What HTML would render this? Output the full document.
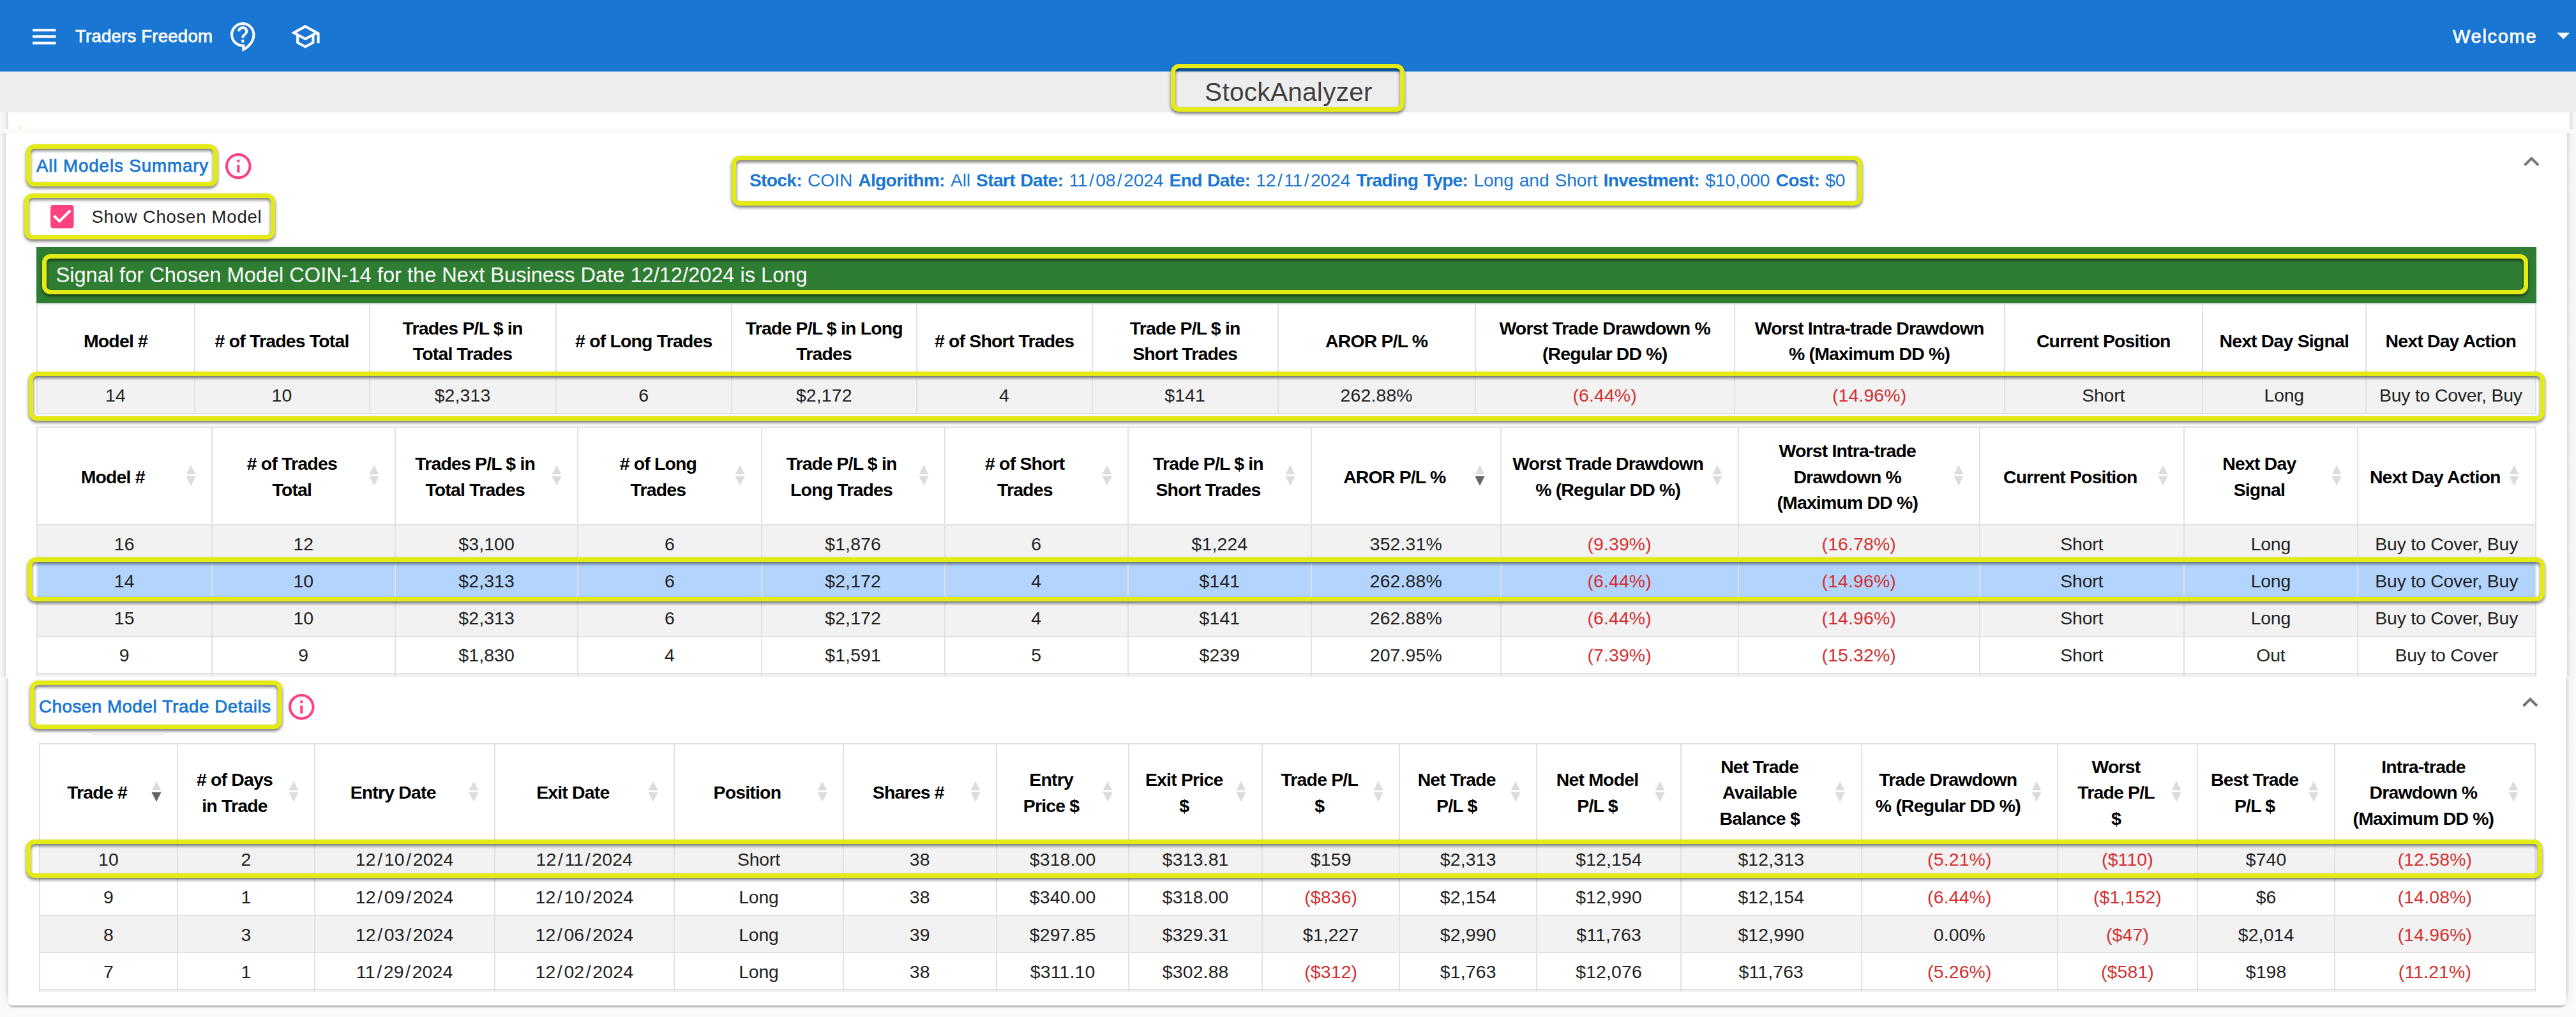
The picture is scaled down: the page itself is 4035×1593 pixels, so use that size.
<!DOCTYPE html>
<html><head><meta charset="utf-8"><style>
html,body{margin:0;padding:0;}
body{width:4035px;height:1593px;overflow:hidden;position:relative;background:#FAFAFA;font-family:"Liberation Sans", sans-serif;}
div{box-sizing:border-box;}
.a{position:absolute;}
.yb{position:absolute;border-style:solid;border-color:#E3EA14;filter:drop-shadow(0px 3px 2.5px rgba(0,0,0,0.55));}
.bg{position:absolute;}
.vl{position:absolute;width:2px;background:#DEE2E6;}
.hl{position:absolute;height:2px;background:#DEE2E6;}
.th{position:absolute;display:flex;align-items:center;justify-content:center;text-align:center;font-weight:700;font-size:28.4px;line-height:40.6px;color:#000;letter-spacing:-0.8px;}
.td{position:absolute;display:flex;align-items:center;justify-content:center;text-align:center;font-size:28.4px;color:#212121;letter-spacing:-0.55px;white-space:nowrap;}
.td.red{color:#D32F2F;}
.nw{white-space:nowrap;}
</style></head><body>

<div class="a" style="left:0;top:0;width:4035px;height:112px;background:#1976D2;"></div>
<svg style="position:absolute;left:44.5px;top:32.7px;width:48.599999999999994px;height:48.599999999999994px" viewBox="0 0 24 24"><path fill="#fff" d="M3 18h18v-2H3v2zm0-5h18v-2H3v2zm0-7v2h18V6H3z"/></svg>
<div class="a nw" style="left:118px;top:36.5px;height:40px;line-height:40px;font-size:27.6px;font-weight:400;-webkit-text-stroke:0.75px #fff;color:#fff;letter-spacing:0.2px">Traders Freedom</div>
<svg style="position:absolute;left:357.1px;top:32.8px;width:48.599999999999994px;height:48.599999999999994px" viewBox="0 0 24 24"><path fill="#fff" d="M11 23.59v-3.6c-5.01-.26-9-4.42-9-9.49C2 5.26 6.26 1 11.5 1S21 5.26 21 10.5c0 4.95-3.44 9.93-8.570 12.4l-1.43.69zM11.5 3C7.36 3 4 6.36 4 10.5S7.36 18 11.5 18H13v2.3c3.64-2.3 6-6.08 6-9.8C19 6.36 15.64 3 11.5 3zm-1 11.5h2v2h-2zm2-1.5h-2c0-3.25 3-3 3-5 0-1.1-.9-2-2-2s-2 .9-2 2h-2c0-2.21 1.790-4 4-4s4 1.79 4 4c0 2.5-3 2.75-3 5z"/></svg>
<svg style="position:absolute;left:453.6px;top:32.8px;width:48.599999999999994px;height:48.599999999999994px" viewBox="0 0 24 24"><path fill="#fff" d="M12 3L1 9l4 2.18v6L12 21l7-3.82v-6l2-1.09V17h2V9L12 3zm6.82 6L12 12.72 5.18 9 12 5.28 18.82 9zM17 15.99l-5 2.73-5-2.73v-3.72L12 15l5-2.73v3.72z"/></svg>
<div class="a nw" style="left:3842px;top:36.5px;height:40px;line-height:40px;font-size:29px;font-weight:400;-webkit-text-stroke:0.75px #fff;color:#fff;letter-spacing:1.7px">Welcome</div>
<svg style="position:absolute;left:3990.8px;top:31.4px;width:48.599999999999994px;height:48.599999999999994px" viewBox="0 0 24 24"><path fill="#fff" d="M7 10l5 5 5-5z"/></svg>
<div class="a" style="left:0;top:112px;width:4035px;height:64px;background:#EDEDED;"></div>
<div class="a" style="left:13px;top:176px;width:4012px;height:26px;background:#fff;"></div>
<div class="a" style="left:0px;top:176px;width:13px;height:26px;background:linear-gradient(to right,#F8F8F8 0%,#F3F3F3 55%,#DCDCDC 100%)"></div>
<div class="a" style="left:4025px;top:176px;width:10px;height:26px;background:linear-gradient(to left,#F8F8F8 0%,#F3F3F3 45%,#DCDCDC 100%)"></div>
<div class="a" style="left:31px;top:199px;width:1.5px;height:3px;background:#E3EA14"></div>
<div class="a" style="left:9px;top:208px;width:4012px;height:852px;background:#fff;"></div>
<div class="a" style="left:0px;top:208px;width:9px;height:852px;background:linear-gradient(to right,#F8F8F8 0%,#F1F1F1 45%,#DCDCDC 100%)"></div>
<div class="a" style="left:4021px;top:208px;width:14px;height:852px;background:linear-gradient(to left,#F8F8F8 0%,#F4F4F4 60%,#DCDCDC 100%)"></div>
<div class="a" style="left:0px;top:1062px;width:13px;height:512px;background:linear-gradient(to right,#F8F8F8 0%,#F3F3F3 55%,#DCDCDC 100%);-webkit-mask-image:linear-gradient(to bottom,#000 96%,transparent 100%)"></div>
<div class="a" style="left:4019px;top:1062px;width:13px;height:512px;background:linear-gradient(to left,#FAFAFA 0%,#F3F3F3 55%,#DCDCDC 100%);-webkit-mask-image:linear-gradient(to bottom,#000 96%,transparent 100%)"></div>
<div class="a" style="left:13px;top:1060px;width:4006px;height:515px;background:#fff;border-radius:4px 4px 7px 7px;box-shadow:0 4px 3px -2px rgba(0,0,0,0.3),0 3px 5px -2px rgba(0,0,0,0.15)"></div>
<div class="a nw" style="left:1835.5px;top:100px;width:366px;height:75px;display:flex;align-items:center;justify-content:center;font-size:40.5px;color:#3F3F3F;padding-top:14px;letter-spacing:0.3px">StockAnalyzer</div>
<div class="yb" style="left:1834px;top:100px;width:366px;height:75px;border-radius:13px;border-width:7.2px"></div>
<div class="a nw" style="left:57px;top:240px;height:40px;line-height:40px;font-size:27.7px;font-weight:400;-webkit-text-stroke:0.75px #1976D2;color:#1976D2;letter-spacing:0.9px">All Models Summary</div>
<div class="yb" style="left:40.9px;top:226.4px;width:300.0px;height:65.79999999999998px;border-radius:13px;border-width:7.2px"></div>
<svg style="position:absolute;left:349.4px;top:235.6px;width:48.599999999999994px;height:48.599999999999994px" viewBox="0 0 24 24"><path fill="#FF4081" d="M11 7h2v2h-2zm0 4h2v6h-2zm1-9C6.48 2 2 6.48 2 12s4.48 10 10 10 10-4.48 10-10S17.52 2 12 2zm0 18c-4.41 0-8-3.59-8-8s3.59-8 8-8 8 3.59 8 8-3.59 8-8 8z"/></svg>
<svg style="position:absolute;left:72.9px;top:315px;width:48.599999999999994px;height:48.599999999999994px" viewBox="0 0 24 24"><path fill="#FF4081" d="M19 3H5c-1.11 0-2 .9-2 2v14c0 1.1.89 2 2 2h14c1.11 0 2-.9 2-2V5c0-1.1-.89-2-2-2zm-9 14l-5-5 1.41-1.41L10 14.17l7.59-7.59L19 8l-9 9z"/></svg>
<div class="a nw" style="left:143.5px;top:319.5px;height:40px;line-height:40px;font-size:27.6px;color:#212121;letter-spacing:0.72px">Show Chosen Model</div>
<div class="yb" style="left:38px;top:303.2px;width:393px;height:71.90000000000003px;border-radius:13px;border-width:7.2px"></div>
<div class="a nw" style="left:1174px;top:262px;height:40px;line-height:40px;font-size:28.2px;color:#1976D2;word-spacing:1.3px"><b style="letter-spacing:-0.7px">Stock:</b> <span style="letter-spacing:-0.1px">COIN</span> <b style="letter-spacing:-0.7px">Algorithm:</b> <span style="letter-spacing:-0.1px">All</span> <b style="letter-spacing:-0.7px">Start Date:</b> <span style="letter-spacing:-0.1px">11<span style="margin:0 2.5px">/</span>08<span style="margin:0 2.5px">/</span>2024</span> <b style="letter-spacing:-0.7px">End Date:</b> <span style="letter-spacing:-0.1px">12<span style="margin:0 2.5px">/</span>11<span style="margin:0 2.5px">/</span>2024</span> <b style="letter-spacing:-0.7px">Trading Type:</b> <span style="letter-spacing:-0.1px">Long and Short</span> <b style="letter-spacing:-0.7px">Investment:</b> <span style="letter-spacing:-0.1px">$10,000</span> <b style="letter-spacing:-0.7px">Cost:</b> <span style="letter-spacing:-0.1px">$0</span></div>
<div class="yb" style="left:1145.7px;top:244px;width:1771.8px;height:77.5px;border-radius:13px;border-width:7.2px"></div>
<svg style="position:absolute;left:3940.7px;top:228.9px;width:48.599999999999994px;height:48.599999999999994px" viewBox="0 0 24 24"><path fill="#757575" d="M12 8l-6 6 1.41 1.41L12 10.83l4.59 4.58L18 14z"/></svg>
<div class="a" style="left:57px;top:387px;width:3916px;height:88px;background:#2E7D32"></div>
<div class="a nw" style="left:87.5px;top:410.5px;height:40px;line-height:40px;font-size:32.6px;color:#fff">Signal for Chosen Model COIN-14 for the Next Business Date 12/12/2024 is Long</div>
<div class="yb" style="left:65.5px;top:397.9px;width:3894.3px;height:63.10000000000002px;border-radius:13px;border-width:7.2px"></div>
<div class="bg" style="left:57.5px;top:589.3px;width:3914.5px;height:58.200000000000045px;background:#F2F2F2"></div>
<div class="vl" style="left:56.5px;top:475px;height:173.5px"></div>
<div class="vl" style="left:303.5px;top:475px;height:173.5px"></div>
<div class="vl" style="left:577.6px;top:475px;height:173.5px"></div>
<div class="vl" style="left:869.5px;top:475px;height:173.5px"></div>
<div class="vl" style="left:1145px;top:475px;height:173.5px"></div>
<div class="vl" style="left:1434.5px;top:475px;height:173.5px"></div>
<div class="vl" style="left:1709.7px;top:475px;height:173.5px"></div>
<div class="vl" style="left:2000.6px;top:475px;height:173.5px"></div>
<div class="vl" style="left:2309.8px;top:475px;height:173.5px"></div>
<div class="vl" style="left:2715.5px;top:475px;height:173.5px"></div>
<div class="vl" style="left:3138.7px;top:475px;height:173.5px"></div>
<div class="vl" style="left:3448.8px;top:475px;height:173.5px"></div>
<div class="vl" style="left:3704.7px;top:475px;height:173.5px"></div>
<div class="vl" style="left:3971px;top:475px;height:173.5px"></div>
<div class="hl" style="left:56.5px;top:475px;width:3916.5px"></div>
<div class="hl" style="left:56.5px;top:588.3px;width:3916.5px"></div>
<div class="hl" style="left:56.5px;top:646.5px;width:3916.5px"></div>
<div class="th" style="left:58.5px;top:478.5px;width:245.0px;height:111.29999999999995px">Model #</div>
<div class="th" style="left:305.5px;top:478.5px;width:272.1px;height:111.29999999999995px"># of Trades Total</div>
<div class="th" style="left:579.6px;top:478.5px;width:289.9px;height:111.29999999999995px">Trades P/L $ in<br>Total Trades</div>
<div class="th" style="left:871.5px;top:478.5px;width:273.5px;height:111.29999999999995px"># of Long Trades</div>
<div class="th" style="left:1147px;top:478.5px;width:287.5px;height:111.29999999999995px">Trade P/L $ in Long<br>Trades</div>
<div class="th" style="left:1436.5px;top:478.5px;width:273.20000000000005px;height:111.29999999999995px"># of Short Trades</div>
<div class="th" style="left:1711.7px;top:478.5px;width:288.89999999999986px;height:111.29999999999995px">Trade P/L $ in<br>Short Trades</div>
<div class="th" style="left:2002.6px;top:478.5px;width:307.2000000000003px;height:111.29999999999995px">AROR P/L %</div>
<div class="th" style="left:2311.8px;top:478.5px;width:403.6999999999998px;height:111.29999999999995px">Worst Trade Drawdown %<br>(Regular DD %)</div>
<div class="th" style="left:2717.5px;top:478.5px;width:421.1999999999998px;height:111.29999999999995px">Worst Intra-trade Drawdown<br>% (Maximum DD %)</div>
<div class="th" style="left:3140.7px;top:478.5px;width:308.10000000000036px;height:111.29999999999995px">Current Position</div>
<div class="th" style="left:3450.8px;top:478.5px;width:253.89999999999964px;height:111.29999999999995px">Next Day Signal</div>
<div class="th" style="left:3706.7px;top:478.5px;width:264.3000000000002px;height:111.29999999999995px">Next Day Action</div>
<div class="td" style="left:58.5px;top:591.3px;width:245.0px;height:56.200000000000045px;letter-spacing:0.15px">14</div>
<div class="td" style="left:305.5px;top:591.3px;width:272.1px;height:56.200000000000045px;letter-spacing:0.15px">10</div>
<div class="td" style="left:579.6px;top:591.3px;width:289.9px;height:56.200000000000045px;letter-spacing:0.15px">$2,313</div>
<div class="td" style="left:871.5px;top:591.3px;width:273.5px;height:56.200000000000045px;letter-spacing:0.15px">6</div>
<div class="td" style="left:1147px;top:591.3px;width:287.5px;height:56.200000000000045px;letter-spacing:0.15px">$2,172</div>
<div class="td" style="left:1436.5px;top:591.3px;width:273.20000000000005px;height:56.200000000000045px;letter-spacing:0.15px">4</div>
<div class="td" style="left:1711.7px;top:591.3px;width:288.89999999999986px;height:56.200000000000045px;letter-spacing:0.15px">$141</div>
<div class="td" style="left:2002.6px;top:591.3px;width:307.2000000000003px;height:56.200000000000045px;letter-spacing:0.15px">262.88%</div>
<div class="td red" style="left:2311.8px;top:591.3px;width:403.6999999999998px;height:56.200000000000045px;letter-spacing:0.15px">(6.44%)</div>
<div class="td red" style="left:2717.5px;top:591.3px;width:421.1999999999998px;height:56.200000000000045px;letter-spacing:0.15px">(14.96%)</div>
<div class="td" style="left:3140.7px;top:591.3px;width:308.10000000000036px;height:56.200000000000045px;letter-spacing:-0.2px">Short</div>
<div class="td" style="left:3450.8px;top:591.3px;width:253.89999999999964px;height:56.200000000000045px;letter-spacing:-0.2px">Long</div>
<div class="td" style="left:3706.7px;top:591.3px;width:264.3000000000002px;height:56.200000000000045px;letter-spacing:-0.2px">Buy to Cover, Buy</div>
<div class="yb" style="left:44.9px;top:582px;width:3940.9px;height:76.89999999999998px;border-radius:13px;border-width:7.2px"></div>
<div class="a" style="left:58px;top:1055.8px;width:3913px;height:4.2px;background:#F1F1F1"></div>
<div class="bg" style="left:57.8px;top:822.2px;width:3913.7px;height:58.19999999999993px;background:#F2F2F2"></div>
<div class="bg" style="left:57.8px;top:880.4px;width:3913.7px;height:58.200000000000045px;background:#B3D4FC"></div>
<div class="bg" style="left:57.8px;top:938.6px;width:3913.7px;height:58.299999999999955px;background:#F2F2F2"></div>
<div class="vl" style="left:56.8px;top:667.6px;height:392.4px"></div>
<div class="vl" style="left:330.7px;top:667.6px;height:392.4px"></div>
<div class="vl" style="left:618px;top:667.6px;height:392.4px"></div>
<div class="vl" style="left:904.3px;top:667.6px;height:392.4px"></div>
<div class="vl" style="left:1191.5px;top:667.6px;height:392.4px"></div>
<div class="vl" style="left:1478.7px;top:667.6px;height:392.4px"></div>
<div class="vl" style="left:1765.9px;top:667.6px;height:392.4px"></div>
<div class="vl" style="left:2053px;top:667.6px;height:392.4px"></div>
<div class="vl" style="left:2349.6px;top:667.6px;height:392.4px"></div>
<div class="vl" style="left:2721.7px;top:667.6px;height:392.4px"></div>
<div class="vl" style="left:3099.8px;top:667.6px;height:392.4px"></div>
<div class="vl" style="left:3419.7px;top:667.6px;height:392.4px"></div>
<div class="vl" style="left:3692px;top:667.6px;height:392.4px"></div>
<div class="vl" style="left:3970.5px;top:667.6px;height:392.4px"></div>
<div class="hl" style="left:56.8px;top:667.6px;width:3915.7px"></div>
<div class="hl" style="left:56.8px;top:821.2px;width:3915.7px"></div>
<div class="hl" style="left:56.8px;top:879.4px;width:3915.7px"></div>
<div class="hl" style="left:56.8px;top:937.6px;width:3915.7px"></div>
<div class="hl" style="left:56.8px;top:995.9px;width:3915.7px"></div>
<div class="hl" style="left:56.8px;top:1053.8px;width:3915.7px"></div>
<div class="th" style="left:58.8px;top:671.1px;width:235.89999999999998px;height:151.60000000000002px">Model #</div>
<svg style="position:absolute;left:290.59999999999997px;top:728.4000000000001px;width:16px;height:34px" viewBox="0 0 16 34"><path fill="#DCDCDC" d="M8 0.5L15.5 15H0.5z"/><path fill="#DCDCDC" d="M0.5 18H15.5L8 33z"/></svg>
<div class="th" style="left:332.7px;top:671.1px;width:249.3px;height:151.60000000000002px"># of Trades<br>Total</div>
<svg style="position:absolute;left:577.9px;top:728.4000000000001px;width:16px;height:34px" viewBox="0 0 16 34"><path fill="#DCDCDC" d="M8 0.5L15.5 15H0.5z"/><path fill="#DCDCDC" d="M0.5 18H15.5L8 33z"/></svg>
<div class="th" style="left:620px;top:671.1px;width:248.29999999999995px;height:151.60000000000002px">Trades P/L $ in<br>Total Trades</div>
<svg style="position:absolute;left:864.1999999999999px;top:728.4000000000001px;width:16px;height:34px" viewBox="0 0 16 34"><path fill="#DCDCDC" d="M8 0.5L15.5 15H0.5z"/><path fill="#DCDCDC" d="M0.5 18H15.5L8 33z"/></svg>
<div class="th" style="left:906.3px;top:671.1px;width:249.20000000000005px;height:151.60000000000002px"># of Long<br>Trades</div>
<svg style="position:absolute;left:1151.4px;top:728.4000000000001px;width:16px;height:34px" viewBox="0 0 16 34"><path fill="#DCDCDC" d="M8 0.5L15.5 15H0.5z"/><path fill="#DCDCDC" d="M0.5 18H15.5L8 33z"/></svg>
<div class="th" style="left:1193.5px;top:671.1px;width:249.20000000000005px;height:151.60000000000002px">Trade P/L $ in<br>Long Trades</div>
<svg style="position:absolute;left:1438.6000000000001px;top:728.4000000000001px;width:16px;height:34px" viewBox="0 0 16 34"><path fill="#DCDCDC" d="M8 0.5L15.5 15H0.5z"/><path fill="#DCDCDC" d="M0.5 18H15.5L8 33z"/></svg>
<div class="th" style="left:1480.7px;top:671.1px;width:249.20000000000005px;height:151.60000000000002px"># of Short<br>Trades</div>
<svg style="position:absolute;left:1725.8000000000002px;top:728.4000000000001px;width:16px;height:34px" viewBox="0 0 16 34"><path fill="#DCDCDC" d="M8 0.5L15.5 15H0.5z"/><path fill="#DCDCDC" d="M0.5 18H15.5L8 33z"/></svg>
<div class="th" style="left:1767.9px;top:671.1px;width:249.0999999999999px;height:151.60000000000002px">Trade P/L $ in<br>Short Trades</div>
<svg style="position:absolute;left:2012.9px;top:728.4000000000001px;width:16px;height:34px" viewBox="0 0 16 34"><path fill="#DCDCDC" d="M8 0.5L15.5 15H0.5z"/><path fill="#DCDCDC" d="M0.5 18H15.5L8 33z"/></svg>
<div class="th" style="left:2055px;top:671.1px;width:258.5999999999999px;height:151.60000000000002px">AROR P/L %</div>
<svg style="position:absolute;left:2309.5px;top:728.4000000000001px;width:16px;height:34px" viewBox="0 0 16 34"><path fill="#DCDCDC" d="M8 0.5L15.5 15H0.5z"/><path fill="#666" d="M0.5 18H15.5L8 33z"/></svg>
<div class="th" style="left:2351.6px;top:671.1px;width:334.0999999999999px;height:151.60000000000002px">Worst Trade Drawdown<br>% (Regular DD %)</div>
<svg style="position:absolute;left:2681.6px;top:728.4000000000001px;width:16px;height:34px" viewBox="0 0 16 34"><path fill="#DCDCDC" d="M8 0.5L15.5 15H0.5z"/><path fill="#DCDCDC" d="M0.5 18H15.5L8 33z"/></svg>
<div class="th" style="left:2723.7px;top:671.1px;width:340.10000000000036px;height:151.60000000000002px">Worst Intra-trade<br>Drawdown %<br>(Maximum DD %)</div>
<svg style="position:absolute;left:3059.7000000000003px;top:728.4000000000001px;width:16px;height:34px" viewBox="0 0 16 34"><path fill="#DCDCDC" d="M8 0.5L15.5 15H0.5z"/><path fill="#DCDCDC" d="M0.5 18H15.5L8 33z"/></svg>
<div class="th" style="left:3101.8px;top:671.1px;width:281.89999999999964px;height:151.60000000000002px">Current Position</div>
<svg style="position:absolute;left:3379.6px;top:728.4000000000001px;width:16px;height:34px" viewBox="0 0 16 34"><path fill="#DCDCDC" d="M8 0.5L15.5 15H0.5z"/><path fill="#DCDCDC" d="M0.5 18H15.5L8 33z"/></svg>
<div class="th" style="left:3421.7px;top:671.1px;width:234.30000000000018px;height:151.60000000000002px">Next Day<br>Signal</div>
<svg style="position:absolute;left:3651.9px;top:728.4000000000001px;width:16px;height:34px" viewBox="0 0 16 34"><path fill="#DCDCDC" d="M8 0.5L15.5 15H0.5z"/><path fill="#DCDCDC" d="M0.5 18H15.5L8 33z"/></svg>
<div class="th" style="left:3694px;top:671.1px;width:240.5px;height:151.60000000000002px">Next Day Action</div>
<svg style="position:absolute;left:3930.4px;top:728.4000000000001px;width:16px;height:34px" viewBox="0 0 16 34"><path fill="#DCDCDC" d="M8 0.5L15.5 15H0.5z"/><path fill="#DCDCDC" d="M0.5 18H15.5L8 33z"/></svg>
<div class="td" style="left:58.8px;top:824.2px;width:271.9px;height:56.19999999999993px;letter-spacing:0.15px">16</div>
<div class="td" style="left:332.7px;top:824.2px;width:285.3px;height:56.19999999999993px;letter-spacing:0.15px">12</div>
<div class="td" style="left:620px;top:824.2px;width:284.29999999999995px;height:56.19999999999993px;letter-spacing:0.15px">$3,100</div>
<div class="td" style="left:906.3px;top:824.2px;width:285.20000000000005px;height:56.19999999999993px;letter-spacing:0.15px">6</div>
<div class="td" style="left:1193.5px;top:824.2px;width:285.20000000000005px;height:56.19999999999993px;letter-spacing:0.15px">$1,876</div>
<div class="td" style="left:1480.7px;top:824.2px;width:285.20000000000005px;height:56.19999999999993px;letter-spacing:0.15px">6</div>
<div class="td" style="left:1767.9px;top:824.2px;width:285.0999999999999px;height:56.19999999999993px;letter-spacing:0.15px">$1,224</div>
<div class="td" style="left:2055px;top:824.2px;width:294.5999999999999px;height:56.19999999999993px;letter-spacing:0.15px">352.31%</div>
<div class="td red" style="left:2351.6px;top:824.2px;width:370.0999999999999px;height:56.19999999999993px;letter-spacing:0.15px">(9.39%)</div>
<div class="td red" style="left:2723.7px;top:824.2px;width:376.10000000000036px;height:56.19999999999993px;letter-spacing:0.15px">(16.78%)</div>
<div class="td" style="left:3101.8px;top:824.2px;width:317.89999999999964px;height:56.19999999999993px;letter-spacing:-0.2px">Short</div>
<div class="td" style="left:3421.7px;top:824.2px;width:270.3000000000002px;height:56.19999999999993px;letter-spacing:-0.2px">Long</div>
<div class="td" style="left:3694px;top:824.2px;width:276.5px;height:56.19999999999993px;letter-spacing:-0.2px">Buy to Cover, Buy</div>
<div class="td" style="left:58.8px;top:882.4px;width:271.9px;height:56.200000000000045px;letter-spacing:0.15px">14</div>
<div class="td" style="left:332.7px;top:882.4px;width:285.3px;height:56.200000000000045px;letter-spacing:0.15px">10</div>
<div class="td" style="left:620px;top:882.4px;width:284.29999999999995px;height:56.200000000000045px;letter-spacing:0.15px">$2,313</div>
<div class="td" style="left:906.3px;top:882.4px;width:285.20000000000005px;height:56.200000000000045px;letter-spacing:0.15px">6</div>
<div class="td" style="left:1193.5px;top:882.4px;width:285.20000000000005px;height:56.200000000000045px;letter-spacing:0.15px">$2,172</div>
<div class="td" style="left:1480.7px;top:882.4px;width:285.20000000000005px;height:56.200000000000045px;letter-spacing:0.15px">4</div>
<div class="td" style="left:1767.9px;top:882.4px;width:285.0999999999999px;height:56.200000000000045px;letter-spacing:0.15px">$141</div>
<div class="td" style="left:2055px;top:882.4px;width:294.5999999999999px;height:56.200000000000045px;letter-spacing:0.15px">262.88%</div>
<div class="td red" style="left:2351.6px;top:882.4px;width:370.0999999999999px;height:56.200000000000045px;letter-spacing:0.15px">(6.44%)</div>
<div class="td red" style="left:2723.7px;top:882.4px;width:376.10000000000036px;height:56.200000000000045px;letter-spacing:0.15px">(14.96%)</div>
<div class="td" style="left:3101.8px;top:882.4px;width:317.89999999999964px;height:56.200000000000045px;letter-spacing:-0.2px">Short</div>
<div class="td" style="left:3421.7px;top:882.4px;width:270.3000000000002px;height:56.200000000000045px;letter-spacing:-0.2px">Long</div>
<div class="td" style="left:3694px;top:882.4px;width:276.5px;height:56.200000000000045px;letter-spacing:-0.2px">Buy to Cover, Buy</div>
<div class="td" style="left:58.8px;top:940.6px;width:271.9px;height:56.299999999999955px;letter-spacing:0.15px">15</div>
<div class="td" style="left:332.7px;top:940.6px;width:285.3px;height:56.299999999999955px;letter-spacing:0.15px">10</div>
<div class="td" style="left:620px;top:940.6px;width:284.29999999999995px;height:56.299999999999955px;letter-spacing:0.15px">$2,313</div>
<div class="td" style="left:906.3px;top:940.6px;width:285.20000000000005px;height:56.299999999999955px;letter-spacing:0.15px">6</div>
<div class="td" style="left:1193.5px;top:940.6px;width:285.20000000000005px;height:56.299999999999955px;letter-spacing:0.15px">$2,172</div>
<div class="td" style="left:1480.7px;top:940.6px;width:285.20000000000005px;height:56.299999999999955px;letter-spacing:0.15px">4</div>
<div class="td" style="left:1767.9px;top:940.6px;width:285.0999999999999px;height:56.299999999999955px;letter-spacing:0.15px">$141</div>
<div class="td" style="left:2055px;top:940.6px;width:294.5999999999999px;height:56.299999999999955px;letter-spacing:0.15px">262.88%</div>
<div class="td red" style="left:2351.6px;top:940.6px;width:370.0999999999999px;height:56.299999999999955px;letter-spacing:0.15px">(6.44%)</div>
<div class="td red" style="left:2723.7px;top:940.6px;width:376.10000000000036px;height:56.299999999999955px;letter-spacing:0.15px">(14.96%)</div>
<div class="td" style="left:3101.8px;top:940.6px;width:317.89999999999964px;height:56.299999999999955px;letter-spacing:-0.2px">Short</div>
<div class="td" style="left:3421.7px;top:940.6px;width:270.3000000000002px;height:56.299999999999955px;letter-spacing:-0.2px">Long</div>
<div class="td" style="left:3694px;top:940.6px;width:276.5px;height:56.299999999999955px;letter-spacing:-0.2px">Buy to Cover, Buy</div>
<div class="td" style="left:58.8px;top:998.9px;width:271.9px;height:55.89999999999998px;letter-spacing:0.15px">9</div>
<div class="td" style="left:332.7px;top:998.9px;width:285.3px;height:55.89999999999998px;letter-spacing:0.15px">9</div>
<div class="td" style="left:620px;top:998.9px;width:284.29999999999995px;height:55.89999999999998px;letter-spacing:0.15px">$1,830</div>
<div class="td" style="left:906.3px;top:998.9px;width:285.20000000000005px;height:55.89999999999998px;letter-spacing:0.15px">4</div>
<div class="td" style="left:1193.5px;top:998.9px;width:285.20000000000005px;height:55.89999999999998px;letter-spacing:0.15px">$1,591</div>
<div class="td" style="left:1480.7px;top:998.9px;width:285.20000000000005px;height:55.89999999999998px;letter-spacing:0.15px">5</div>
<div class="td" style="left:1767.9px;top:998.9px;width:285.0999999999999px;height:55.89999999999998px;letter-spacing:0.15px">$239</div>
<div class="td" style="left:2055px;top:998.9px;width:294.5999999999999px;height:55.89999999999998px;letter-spacing:0.15px">207.95%</div>
<div class="td red" style="left:2351.6px;top:998.9px;width:370.0999999999999px;height:55.89999999999998px;letter-spacing:0.15px">(7.39%)</div>
<div class="td red" style="left:2723.7px;top:998.9px;width:376.10000000000036px;height:55.89999999999998px;letter-spacing:0.15px">(15.32%)</div>
<div class="td" style="left:3101.8px;top:998.9px;width:317.89999999999964px;height:55.89999999999998px;letter-spacing:-0.2px">Short</div>
<div class="td" style="left:3421.7px;top:998.9px;width:270.3000000000002px;height:55.89999999999998px;letter-spacing:-0.2px">Out</div>
<div class="td" style="left:3694px;top:998.9px;width:276.5px;height:55.89999999999998px;letter-spacing:-0.2px">Buy to Cover</div>
<div class="yb" style="left:43.1px;top:872.8px;width:3942.7000000000003px;height:68.80000000000007px;border-radius:13px;border-width:7.2px"></div>
<div class="a nw" style="left:61px;top:1087px;height:40px;line-height:40px;font-size:27.7px;font-weight:400;-webkit-text-stroke:0.75px #1976D2;color:#1976D2;letter-spacing:0.55px">Chosen Model Trade Details</div>
<div class="a" style="left:141px;top:1140px;width:121px;height:11px;border-bottom:1.5px solid #E6E9EE;border-radius:0 0 8px 8px"></div>
<div class="yb" style="left:47px;top:1066.2px;width:395px;height:75.79999999999995px;border-radius:13px;border-width:7.2px"></div>
<svg style="position:absolute;left:447.7px;top:1082.6px;width:48.599999999999994px;height:48.599999999999994px" viewBox="0 0 24 24"><path fill="#FF4081" d="M11 7h2v2h-2zm0 4h2v6h-2zm1-9C6.48 2 2 6.48 2 12s4.48 10 10 10 10-4.48 10-10S17.52 2 12 2zm0 18c-4.41 0-8-3.59-8-8s3.59-8 8-8 8 3.59 8 8-3.59 8-8 8z"/></svg>
<svg style="position:absolute;left:3938.7px;top:1076.1px;width:48.599999999999994px;height:48.599999999999994px" viewBox="0 0 24 24"><path fill="#757575" d="M12 8l-6 6 1.41 1.41L12 10.83l4.59 4.58L18 14z"/></svg>
<div class="a" style="left:61px;top:1550.8px;width:3910px;height:3px;background:#F1F1F1"></div>
<div class="bg" style="left:61.8px;top:1315.9px;width:3908.7px;height:59.09999999999991px;background:#F2F2F2"></div>
<div class="bg" style="left:61.8px;top:1433.9px;width:3908.7px;height:58.399999999999864px;background:#F2F2F2"></div>
<div class="vl" style="left:60.8px;top:1163.7px;height:389.79999999999995px"></div>
<div class="vl" style="left:277.3px;top:1163.7px;height:389.79999999999995px"></div>
<div class="vl" style="left:491.7px;top:1163.7px;height:389.79999999999995px"></div>
<div class="vl" style="left:773.6px;top:1163.7px;height:389.79999999999995px"></div>
<div class="vl" style="left:1055px;top:1163.7px;height:389.79999999999995px"></div>
<div class="vl" style="left:1319.8px;top:1163.7px;height:389.79999999999995px"></div>
<div class="vl" style="left:1559.8px;top:1163.7px;height:389.79999999999995px"></div>
<div class="vl" style="left:1767.4px;top:1163.7px;height:389.79999999999995px"></div>
<div class="vl" style="left:1976px;top:1163.7px;height:389.79999999999995px"></div>
<div class="vl" style="left:2191.4px;top:1163.7px;height:389.79999999999995px"></div>
<div class="vl" style="left:2406.1px;top:1163.7px;height:389.79999999999995px"></div>
<div class="vl" style="left:2632px;top:1163.7px;height:389.79999999999995px"></div>
<div class="vl" style="left:2914.5px;top:1163.7px;height:389.79999999999995px"></div>
<div class="vl" style="left:3222.2px;top:1163.7px;height:389.79999999999995px"></div>
<div class="vl" style="left:3440.8px;top:1163.7px;height:389.79999999999995px"></div>
<div class="vl" style="left:3656.4px;top:1163.7px;height:389.79999999999995px"></div>
<div class="vl" style="left:3969.5px;top:1163.7px;height:389.79999999999995px"></div>
<div class="hl" style="left:60.8px;top:1163.7px;width:3910.7px"></div>
<div class="hl" style="left:60.8px;top:1314.9px;width:3910.7px"></div>
<div class="hl" style="left:60.8px;top:1374px;width:3910.7px"></div>
<div class="hl" style="left:60.8px;top:1432.9px;width:3910.7px"></div>
<div class="hl" style="left:60.8px;top:1491.3px;width:3910.7px"></div>
<div class="hl" style="left:60.8px;top:1548.8px;width:3910.7px"></div>
<div class="th" style="left:62.8px;top:1167.2px;width:178.5px;height:149.20000000000005px">Trade #</div>
<svg style="position:absolute;left:237.20000000000002px;top:1223.3000000000002px;width:16px;height:34px" viewBox="0 0 16 34"><path fill="#DCDCDC" d="M8 0.5L15.5 15H0.5z"/><path fill="#666" d="M0.5 18H15.5L8 33z"/></svg>
<div class="th" style="left:279.3px;top:1167.2px;width:176.39999999999998px;height:149.20000000000005px"># of Days<br>in Trade</div>
<svg style="position:absolute;left:451.59999999999997px;top:1223.3000000000002px;width:16px;height:34px" viewBox="0 0 16 34"><path fill="#DCDCDC" d="M8 0.5L15.5 15H0.5z"/><path fill="#DCDCDC" d="M0.5 18H15.5L8 33z"/></svg>
<div class="th" style="left:493.7px;top:1167.2px;width:243.90000000000003px;height:149.20000000000005px">Entry Date</div>
<svg style="position:absolute;left:733.5px;top:1223.3000000000002px;width:16px;height:34px" viewBox="0 0 16 34"><path fill="#DCDCDC" d="M8 0.5L15.5 15H0.5z"/><path fill="#DCDCDC" d="M0.5 18H15.5L8 33z"/></svg>
<div class="th" style="left:775.6px;top:1167.2px;width:243.39999999999998px;height:149.20000000000005px">Exit Date</div>
<svg style="position:absolute;left:1014.9000000000001px;top:1223.3000000000002px;width:16px;height:34px" viewBox="0 0 16 34"><path fill="#DCDCDC" d="M8 0.5L15.5 15H0.5z"/><path fill="#DCDCDC" d="M0.5 18H15.5L8 33z"/></svg>
<div class="th" style="left:1057px;top:1167.2px;width:226.79999999999995px;height:149.20000000000005px">Position</div>
<svg style="position:absolute;left:1279.7px;top:1223.3000000000002px;width:16px;height:34px" viewBox="0 0 16 34"><path fill="#DCDCDC" d="M8 0.5L15.5 15H0.5z"/><path fill="#DCDCDC" d="M0.5 18H15.5L8 33z"/></svg>
<div class="th" style="left:1321.8px;top:1167.2px;width:202.0px;height:149.20000000000005px">Shares #</div>
<svg style="position:absolute;left:1519.7px;top:1223.3000000000002px;width:16px;height:34px" viewBox="0 0 16 34"><path fill="#DCDCDC" d="M8 0.5L15.5 15H0.5z"/><path fill="#DCDCDC" d="M0.5 18H15.5L8 33z"/></svg>
<div class="th" style="left:1561.8px;top:1167.2px;width:169.60000000000014px;height:149.20000000000005px">Entry<br>Price $</div>
<svg style="position:absolute;left:1727.3000000000002px;top:1223.3000000000002px;width:16px;height:34px" viewBox="0 0 16 34"><path fill="#DCDCDC" d="M8 0.5L15.5 15H0.5z"/><path fill="#DCDCDC" d="M0.5 18H15.5L8 33z"/></svg>
<div class="th" style="left:1769.4px;top:1167.2px;width:170.5999999999999px;height:149.20000000000005px">Exit Price<br>$</div>
<svg style="position:absolute;left:1935.9px;top:1223.3000000000002px;width:16px;height:34px" viewBox="0 0 16 34"><path fill="#DCDCDC" d="M8 0.5L15.5 15H0.5z"/><path fill="#DCDCDC" d="M0.5 18H15.5L8 33z"/></svg>
<div class="th" style="left:1978px;top:1167.2px;width:177.4000000000001px;height:149.20000000000005px">Trade P/L<br>$</div>
<svg style="position:absolute;left:2151.3px;top:1223.3000000000002px;width:16px;height:34px" viewBox="0 0 16 34"><path fill="#DCDCDC" d="M8 0.5L15.5 15H0.5z"/><path fill="#DCDCDC" d="M0.5 18H15.5L8 33z"/></svg>
<div class="th" style="left:2193.4px;top:1167.2px;width:176.69999999999982px;height:149.20000000000005px">Net Trade<br>P/L $</div>
<svg style="position:absolute;left:2366.0px;top:1223.3000000000002px;width:16px;height:34px" viewBox="0 0 16 34"><path fill="#DCDCDC" d="M8 0.5L15.5 15H0.5z"/><path fill="#DCDCDC" d="M0.5 18H15.5L8 33z"/></svg>
<div class="th" style="left:2408.1px;top:1167.2px;width:187.9000000000001px;height:149.20000000000005px">Net Model<br>P/L $</div>
<svg style="position:absolute;left:2591.9px;top:1223.3000000000002px;width:16px;height:34px" viewBox="0 0 16 34"><path fill="#DCDCDC" d="M8 0.5L15.5 15H0.5z"/><path fill="#DCDCDC" d="M0.5 18H15.5L8 33z"/></svg>
<div class="th" style="left:2634px;top:1167.2px;width:244.5px;height:149.20000000000005px">Net Trade<br>Available<br>Balance $</div>
<svg style="position:absolute;left:2874.4px;top:1223.3000000000002px;width:16px;height:34px" viewBox="0 0 16 34"><path fill="#DCDCDC" d="M8 0.5L15.5 15H0.5z"/><path fill="#DCDCDC" d="M0.5 18H15.5L8 33z"/></svg>
<div class="th" style="left:2916.5px;top:1167.2px;width:269.6999999999998px;height:149.20000000000005px">Trade Drawdown<br>% (Regular DD %)</div>
<svg style="position:absolute;left:3182.1px;top:1223.3000000000002px;width:16px;height:34px" viewBox="0 0 16 34"><path fill="#DCDCDC" d="M8 0.5L15.5 15H0.5z"/><path fill="#DCDCDC" d="M0.5 18H15.5L8 33z"/></svg>
<div class="th" style="left:3224.2px;top:1167.2px;width:180.60000000000036px;height:149.20000000000005px">Worst<br>Trade P/L<br>$</div>
<svg style="position:absolute;left:3400.7000000000003px;top:1223.3000000000002px;width:16px;height:34px" viewBox="0 0 16 34"><path fill="#DCDCDC" d="M8 0.5L15.5 15H0.5z"/><path fill="#DCDCDC" d="M0.5 18H15.5L8 33z"/></svg>
<div class="th" style="left:3442.8px;top:1167.2px;width:177.5999999999999px;height:149.20000000000005px">Best Trade<br>P/L $</div>
<svg style="position:absolute;left:3616.3px;top:1223.3000000000002px;width:16px;height:34px" viewBox="0 0 16 34"><path fill="#DCDCDC" d="M8 0.5L15.5 15H0.5z"/><path fill="#DCDCDC" d="M0.5 18H15.5L8 33z"/></svg>
<div class="th" style="left:3658.4px;top:1167.2px;width:275.0999999999999px;height:149.20000000000005px">Intra-trade<br>Drawdown %<br>(Maximum DD %)</div>
<svg style="position:absolute;left:3929.4px;top:1223.3000000000002px;width:16px;height:34px" viewBox="0 0 16 34"><path fill="#DCDCDC" d="M8 0.5L15.5 15H0.5z"/><path fill="#DCDCDC" d="M0.5 18H15.5L8 33z"/></svg>
<div class="td" style="left:62.8px;top:1317.9px;width:214.5px;height:57.09999999999991px;letter-spacing:0.15px">10</div>
<div class="td" style="left:279.3px;top:1317.9px;width:212.39999999999998px;height:57.09999999999991px;letter-spacing:0.15px">2</div>
<div class="td" style="left:493.7px;top:1317.9px;width:279.90000000000003px;height:57.09999999999991px;letter-spacing:0.15px">12<span style="margin:0 2.5px">/</span>10<span style="margin:0 2.5px">/</span>2024</div>
<div class="td" style="left:775.6px;top:1317.9px;width:279.4px;height:57.09999999999991px;letter-spacing:0.15px">12<span style="margin:0 2.5px">/</span>11<span style="margin:0 2.5px">/</span>2024</div>
<div class="td" style="left:1057px;top:1317.9px;width:262.79999999999995px;height:57.09999999999991px;letter-spacing:-0.2px">Short</div>
<div class="td" style="left:1321.8px;top:1317.9px;width:238.0px;height:57.09999999999991px;letter-spacing:0.15px">38</div>
<div class="td" style="left:1561.8px;top:1317.9px;width:205.60000000000014px;height:57.09999999999991px;letter-spacing:0.15px">$318.00</div>
<div class="td" style="left:1769.4px;top:1317.9px;width:206.5999999999999px;height:57.09999999999991px;letter-spacing:0.15px">$313.81</div>
<div class="td" style="left:1978px;top:1317.9px;width:213.4000000000001px;height:57.09999999999991px;letter-spacing:0.15px">$159</div>
<div class="td" style="left:2193.4px;top:1317.9px;width:212.69999999999982px;height:57.09999999999991px;letter-spacing:0.15px">$2,313</div>
<div class="td" style="left:2408.1px;top:1317.9px;width:223.9000000000001px;height:57.09999999999991px;letter-spacing:0.15px">$12,154</div>
<div class="td" style="left:2634px;top:1317.9px;width:280.5px;height:57.09999999999991px;letter-spacing:0.15px">$12,313</div>
<div class="td red" style="left:2916.5px;top:1317.9px;width:305.6999999999998px;height:57.09999999999991px;letter-spacing:0.15px">(5.21%)</div>
<div class="td red" style="left:3224.2px;top:1317.9px;width:216.60000000000036px;height:57.09999999999991px;letter-spacing:0.15px">($110)</div>
<div class="td" style="left:3442.8px;top:1317.9px;width:213.5999999999999px;height:57.09999999999991px;letter-spacing:0.15px">$740</div>
<div class="td red" style="left:3658.4px;top:1317.9px;width:311.0999999999999px;height:57.09999999999991px;letter-spacing:0.15px">(12.58%)</div>
<div class="td" style="left:62.8px;top:1377px;width:214.5px;height:56.90000000000009px;letter-spacing:0.15px">9</div>
<div class="td" style="left:279.3px;top:1377px;width:212.39999999999998px;height:56.90000000000009px;letter-spacing:0.15px">1</div>
<div class="td" style="left:493.7px;top:1377px;width:279.90000000000003px;height:56.90000000000009px;letter-spacing:0.15px">12<span style="margin:0 2.5px">/</span>09<span style="margin:0 2.5px">/</span>2024</div>
<div class="td" style="left:775.6px;top:1377px;width:279.4px;height:56.90000000000009px;letter-spacing:0.15px">12<span style="margin:0 2.5px">/</span>10<span style="margin:0 2.5px">/</span>2024</div>
<div class="td" style="left:1057px;top:1377px;width:262.79999999999995px;height:56.90000000000009px;letter-spacing:-0.2px">Long</div>
<div class="td" style="left:1321.8px;top:1377px;width:238.0px;height:56.90000000000009px;letter-spacing:0.15px">38</div>
<div class="td" style="left:1561.8px;top:1377px;width:205.60000000000014px;height:56.90000000000009px;letter-spacing:0.15px">$340.00</div>
<div class="td" style="left:1769.4px;top:1377px;width:206.5999999999999px;height:56.90000000000009px;letter-spacing:0.15px">$318.00</div>
<div class="td red" style="left:1978px;top:1377px;width:213.4000000000001px;height:56.90000000000009px;letter-spacing:0.15px">($836)</div>
<div class="td" style="left:2193.4px;top:1377px;width:212.69999999999982px;height:56.90000000000009px;letter-spacing:0.15px">$2,154</div>
<div class="td" style="left:2408.1px;top:1377px;width:223.9000000000001px;height:56.90000000000009px;letter-spacing:0.15px">$12,990</div>
<div class="td" style="left:2634px;top:1377px;width:280.5px;height:56.90000000000009px;letter-spacing:0.15px">$12,154</div>
<div class="td red" style="left:2916.5px;top:1377px;width:305.6999999999998px;height:56.90000000000009px;letter-spacing:0.15px">(6.44%)</div>
<div class="td red" style="left:3224.2px;top:1377px;width:216.60000000000036px;height:56.90000000000009px;letter-spacing:0.15px">($1,152)</div>
<div class="td" style="left:3442.8px;top:1377px;width:213.5999999999999px;height:56.90000000000009px;letter-spacing:0.15px">$6</div>
<div class="td red" style="left:3658.4px;top:1377px;width:311.0999999999999px;height:56.90000000000009px;letter-spacing:0.15px">(14.08%)</div>
<div class="td" style="left:62.8px;top:1435.9px;width:214.5px;height:56.399999999999864px;letter-spacing:0.15px">8</div>
<div class="td" style="left:279.3px;top:1435.9px;width:212.39999999999998px;height:56.399999999999864px;letter-spacing:0.15px">3</div>
<div class="td" style="left:493.7px;top:1435.9px;width:279.90000000000003px;height:56.399999999999864px;letter-spacing:0.15px">12<span style="margin:0 2.5px">/</span>03<span style="margin:0 2.5px">/</span>2024</div>
<div class="td" style="left:775.6px;top:1435.9px;width:279.4px;height:56.399999999999864px;letter-spacing:0.15px">12<span style="margin:0 2.5px">/</span>06<span style="margin:0 2.5px">/</span>2024</div>
<div class="td" style="left:1057px;top:1435.9px;width:262.79999999999995px;height:56.399999999999864px;letter-spacing:-0.2px">Long</div>
<div class="td" style="left:1321.8px;top:1435.9px;width:238.0px;height:56.399999999999864px;letter-spacing:0.15px">39</div>
<div class="td" style="left:1561.8px;top:1435.9px;width:205.60000000000014px;height:56.399999999999864px;letter-spacing:0.15px">$297.85</div>
<div class="td" style="left:1769.4px;top:1435.9px;width:206.5999999999999px;height:56.399999999999864px;letter-spacing:0.15px">$329.31</div>
<div class="td" style="left:1978px;top:1435.9px;width:213.4000000000001px;height:56.399999999999864px;letter-spacing:0.15px">$1,227</div>
<div class="td" style="left:2193.4px;top:1435.9px;width:212.69999999999982px;height:56.399999999999864px;letter-spacing:0.15px">$2,990</div>
<div class="td" style="left:2408.1px;top:1435.9px;width:223.9000000000001px;height:56.399999999999864px;letter-spacing:0.15px">$11,763</div>
<div class="td" style="left:2634px;top:1435.9px;width:280.5px;height:56.399999999999864px;letter-spacing:0.15px">$12,990</div>
<div class="td" style="left:2916.5px;top:1435.9px;width:305.6999999999998px;height:56.399999999999864px;letter-spacing:0.15px">0.00%</div>
<div class="td red" style="left:3224.2px;top:1435.9px;width:216.60000000000036px;height:56.399999999999864px;letter-spacing:0.15px">($47)</div>
<div class="td" style="left:3442.8px;top:1435.9px;width:213.5999999999999px;height:56.399999999999864px;letter-spacing:0.15px">$2,014</div>
<div class="td red" style="left:3658.4px;top:1435.9px;width:311.0999999999999px;height:56.399999999999864px;letter-spacing:0.15px">(14.96%)</div>
<div class="td" style="left:62.8px;top:1494.3px;width:214.5px;height:55.5px;letter-spacing:0.15px">7</div>
<div class="td" style="left:279.3px;top:1494.3px;width:212.39999999999998px;height:55.5px;letter-spacing:0.15px">1</div>
<div class="td" style="left:493.7px;top:1494.3px;width:279.90000000000003px;height:55.5px;letter-spacing:0.15px">11<span style="margin:0 2.5px">/</span>29<span style="margin:0 2.5px">/</span>2024</div>
<div class="td" style="left:775.6px;top:1494.3px;width:279.4px;height:55.5px;letter-spacing:0.15px">12<span style="margin:0 2.5px">/</span>02<span style="margin:0 2.5px">/</span>2024</div>
<div class="td" style="left:1057px;top:1494.3px;width:262.79999999999995px;height:55.5px;letter-spacing:-0.2px">Long</div>
<div class="td" style="left:1321.8px;top:1494.3px;width:238.0px;height:55.5px;letter-spacing:0.15px">38</div>
<div class="td" style="left:1561.8px;top:1494.3px;width:205.60000000000014px;height:55.5px;letter-spacing:0.15px">$311.10</div>
<div class="td" style="left:1769.4px;top:1494.3px;width:206.5999999999999px;height:55.5px;letter-spacing:0.15px">$302.88</div>
<div class="td red" style="left:1978px;top:1494.3px;width:213.4000000000001px;height:55.5px;letter-spacing:0.15px">($312)</div>
<div class="td" style="left:2193.4px;top:1494.3px;width:212.69999999999982px;height:55.5px;letter-spacing:0.15px">$1,763</div>
<div class="td" style="left:2408.1px;top:1494.3px;width:223.9000000000001px;height:55.5px;letter-spacing:0.15px">$12,076</div>
<div class="td" style="left:2634px;top:1494.3px;width:280.5px;height:55.5px;letter-spacing:0.15px">$11,763</div>
<div class="td red" style="left:2916.5px;top:1494.3px;width:305.6999999999998px;height:55.5px;letter-spacing:0.15px">(5.26%)</div>
<div class="td red" style="left:3224.2px;top:1494.3px;width:216.60000000000036px;height:55.5px;letter-spacing:0.15px">($581)</div>
<div class="td" style="left:3442.8px;top:1494.3px;width:213.5999999999999px;height:55.5px;letter-spacing:0.15px">$198</div>
<div class="td red" style="left:3658.4px;top:1494.3px;width:311.0999999999999px;height:55.5px;letter-spacing:0.15px">(11.21%)</div>
<div class="yb" style="left:40.8px;top:1315.2px;width:3941.2px;height:60.299999999999955px;border-radius:13px;border-width:7.2px"></div>
</body></html>
